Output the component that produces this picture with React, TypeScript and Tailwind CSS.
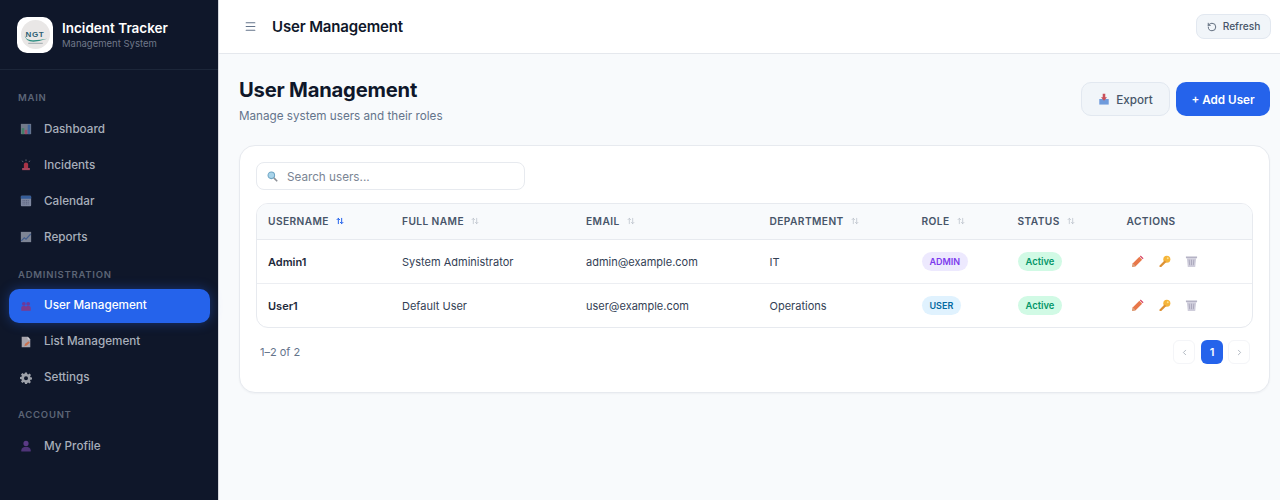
import { Menu, RotateCw, ChevronLeft, ChevronRight, ArrowUpDown } from 'lucide-react'

const FONT = "font-['Inter','Liberation_Sans',sans-serif]"

function DashboardIcon() {
  return (
    <svg viewBox="0 0 14 14" className="w-3 h-3 opacity-80">
      <rect x="1" y="1" width="12" height="12" fill="#8b93a3" />
      <rect x="2" y="6" width="3" height="7" fill="#4f9a78" />
      <rect x="5.5" y="8" width="3" height="5" fill="#c25a7c" />
      <rect x="9" y="2" width="3" height="11" fill="#4a78b8" />
    </svg>
  )
}

function AlarmIcon() {
  return (
    <svg viewBox="0 0 14 14" className="w-3 h-3 opacity-80">
      <path d="M4.5 11V6.5a2.5 2.5 0 0 1 5 0V11z" fill="#d13c4f" />
      <rect x="2.5" y="10.5" width="9" height="2.5" fill="#c9516a" />
      <path d="M7 .5v2M2.5 2l1.2 1.6M11.5 2l-1.2 1.6" stroke="#a3a8b3" strokeWidth="0.8" />
    </svg>
  )
}

function CalendarIcon() {
  return (
    <svg viewBox="0 0 14 14" className="w-3 h-3 opacity-80">
      <rect x="1" y="1" width="12" height="12" rx="1" fill="#9aa3bd" />
      <rect x="1" y="1" width="12" height="3.5" rx="1" fill="#3f6fb5" />
      <path d="M3 6.5h8M3 8.5h8M3 10.5h8" stroke="#6a7391" strokeWidth="1" strokeDasharray="1.2 .8" />
    </svg>
  )
}

function ChartIcon() {
  return (
    <svg viewBox="0 0 14 14" className="w-3 h-3 opacity-80">
      <rect x="1" y="1" width="12" height="12" fill="#9aa1b0" />
      <path d="M1.5 11.5 5 8l2 1.5L12.5 3.5" stroke="#4e6ea6" strokeWidth="1.3" fill="none" />
    </svg>
  )
}

function UsersIcon() {
  return (
    <svg viewBox="0 0 14 14" className="w-3 h-3">
      <circle cx="4.5" cy="4.5" r="2.2" fill="#6a3a9c" />
      <circle cx="9.5" cy="4.5" r="2.2" fill="#6a3a9c" />
      <path d="M1.5 12.5V9a2 2 0 0 1 2-2h2a2 2 0 0 1 1.5.7A2 2 0 0 1 8.5 7h2a2 2 0 0 1 2 2v3.5z" fill="#7c3a8c" />
    </svg>
  )
}

function ListIcon() {
  return (
    <svg viewBox="0 0 14 14" className="w-3 h-3">
      <path d="M2 1h7l3 3v9H2z" fill="#a8a5ad" />
      <path d="M9 1l3 3H9z" fill="#d7d5da" />
      <path d="M5 12l1-3 4-3 1.5 1.5-3.5 3.5z" fill="#c9714f" />
    </svg>
  )
}

function GearIcon() {
  return (
    <svg viewBox="0 0 24 24" className="w-3 h-3" fill="#9da1a9">
      <path fillRule="evenodd" d="M10 1h4l.6 3.2 1.9.8 2.7-1.8 2.8 2.8-1.8 2.7.8 1.9L24 11v4l-3.2.6-.8 1.9 1.8 2.7-2.8 2.8-2.7-1.8-1.7.7L14 24h-4l-.6-3.1-1.9-.8-2.7 1.8L2 19.1l1.8-2.7-.8-1.800L0 14v-4l3-.6.8-1.9L2 4.800 4.800 2l2.700 1.800 1.900-.7zM12 8.500a4 4 0 1 0 0 8 4 4 0 0 0 0-8z" />
    </svg>
  )
}

function ProfileIcon() {
  return (
    <svg viewBox="0 0 14 14" className="w-3 h-3">
      <circle cx="7" cy="4" r="3" fill="#5b3a86" />
      <path d="M1.5 13.5V12c0-2.5 2.5-4 5.5-4s5.5 1.5 5.5 4v1.5z" fill="#4f3478" />
    </svg>
  )
}

function PencilIcon() {
  return (
    <svg viewBox="0 0 14 14" className="w-[13px] h-[13px]">
      <path d="M1 13l1-4 7-7 3 3-7 7z" fill="#e8784a" />
      <path d="M9.5 1.5l1-1 3 3-1 1z" fill="#d9496a" />
      <path d="M1 13l1-4 3 3z" fill="#d9a27e" />
    </svg>
  )
}

function KeyIcon() {
  return (
    <svg viewBox="0 0 14 14" className="w-[13px] h-[13px]">
      <circle cx="9.5" cy="4.5" r="3.8" fill="#f5b53a" />
      <path d="M7 6L1.5 11.5l.3 1.5 1.7-.2L9 7.5z" fill="#dd9134" />
      <circle cx="10.5" cy="3.5" r="1" fill="#fbe08e" />
    </svg>
  )
}

function TrashIcon() {
  return (
    <svg viewBox="0 0 14 14" className="w-[13px] h-[13px]">
      <path d="M1 1.5h12v2H1z" fill="#b5b3c5" />
      <path d="M2 3.5h10L11 13H3z" fill="#cfcddb" />
      <path d="M4.5 5l.5 6M7 5v6M9.5 5L9 11" stroke="#a09eb3" strokeWidth="0.8" />
    </svg>
  )
}

function SearchIcon() {
  return (
    <svg viewBox="0 0 14 14" className="w-[11px] h-[11px]">
      <circle cx="5.5" cy="5.5" r="4.2" fill="#a9d4ea" stroke="#6ea5c4" strokeWidth="1.3" />
      <path d="M8.7 8.7L13 13" stroke="#8b8f96" strokeWidth="2" />
    </svg>
  )
}

function ExportIcon() {
  return (
    <svg viewBox="0 0 14 14" className="w-[12px] h-[12px]">
      <path d="M1.5 7h11v6.5h-11z" fill="#6f9bdc" />
      <path d="M5.5 1h3v4h2L7 9 3.5 5h2z" fill="#c9505a" />
    </svg>
  )
}

function Logo() {
  return (
    <div className="w-9 h-9 rounded-[10px] bg-white flex items-center justify-center">
      <div className="relative w-[29px] h-[29px] rounded-full bg-[#e9e7e6] flex items-center justify-center">
        <span className="text-[8px] leading-none font-bold tracking-[0.08em] text-[#2c5f74] font-['Liberation_Sans',sans-serif]">NGT</span>
        <svg viewBox="0 0 28 28" className="absolute inset-0 w-full h-full">
          <path d="M3 13q1 7 9 6.5 7-.5 13-1.5-7 2.5-13 3-8 0-9-8z" fill="#2f8f83" />
          <path d="M7 22.5h14" stroke="#8a9aa0" strokeWidth="0.8" />
        </svg>
      </div>
    </div>
  )
}

const SECTIONS = [
  {
    title: 'MAIN',
    items: [
      { label: 'Dashboard', icon: <DashboardIcon /> },
      { label: 'Incidents', icon: <AlarmIcon /> },
      { label: 'Calendar', icon: <CalendarIcon /> },
      { label: 'Reports', icon: <ChartIcon /> },
    ],
  },
  {
    title: 'ADMINISTRATION',
    items: [
      { label: 'User Management', icon: <UsersIcon />, active: true },
      { label: 'List Management', icon: <ListIcon /> },
      { label: 'Settings', icon: <GearIcon /> },
    ],
  },
  {
    title: 'ACCOUNT',
    items: [{ label: 'My Profile', icon: <ProfileIcon /> }],
  },
]

const USERS = [
  { username: 'Admin1', name: 'System Administrator', email: 'admin@example.com', dept: 'IT', role: 'ADMIN' },
  { username: 'User1', name: 'Default User', email: 'user@example.com', dept: 'Operations', role: 'USER' },
]

const COLUMNS = [
  { label: 'USERNAME', sorted: true },
  { label: 'FULL NAME' },
  { label: 'EMAIL' },
  { label: 'DEPARTMENT' },
  { label: 'ROLE' },
  { label: 'STATUS' },
]

const ROW = 'grid grid-cols-[134px_184px_183.5px_152px_96px_109px_1fr] items-center pl-[11px]'

function Sidebar() {
  return (
    <aside className="w-[219px] shrink-0 bg-[#0f172a] border-r border-[#d5d8de] flex flex-col">
      <div className="h-[70px] shrink-0 border-b border-[#1c2639] flex items-center gap-[9px] pl-[17px]">
        <Logo />
        <div>
          <div className="text-[13.5px] leading-[17px] font-semibold text-white">Incident Tracker</div>
          <div className="pt-px text-[9.5px] leading-[12px] text-[#6f7889]">Management System</div>
        </div>
      </div>
      <nav className="pl-[9px] pr-[8px] pt-[21px]">
        {SECTIONS.map((s) => (
          <div key={s.title} className="mb-[13.5px]">
            <div className="h-[14px] pl-[9px] mb-[7px] text-[9.5px] leading-[14px] font-semibold tracking-[0.08em] text-[#5c6576]">
              {s.title}
            </div>
            <div className="flex flex-col gap-[2px]">
              {s.items.map((item) => (
                <div
                  key={item.label}
                  className={
                    item.active
                      ? 'h-[34px] flex items-center gap-[12px] pl-[11px] rounded-[10px] bg-[#2563eb] text-white font-medium shadow-[0_0_12px_rgba(37,99,235,0.4)]'
                      : 'h-[34px] flex items-center gap-[12px] pl-[11px] rounded-[10px] text-[#a8afbb] font-medium'
                  }
                >
                  {item.icon}
                  <span className="pt-px text-[11.7px] leading-none">{item.label}</span>
                </div>
              ))}
            </div>
          </div>
        ))}
      </nav>
    </aside>
  )
}

function UsersTable() {
  return (
    <div className="rounded-xl border border-[#e7eaef] overflow-hidden">
      <div className={ROW + ' h-[36px] bg-[#f8fafc] border-b border-[#e7eaef]'}>
        {COLUMNS.map((c) => (
          <div key={c.label} className="flex items-center gap-[7px] text-[10.2px] font-semibold tracking-[0.04em] text-[#475569]">
            {c.label}
            <ArrowUpDown
              strokeWidth={c.sorted ? 3 : 2}
              className={c.sorted ? 'w-2 h-2 text-[#2563eb]' : 'w-2 h-2 text-[#b4bbc6]'}
            />
          </div>
        ))}
        <div className="text-[10.2px] font-semibold tracking-[0.04em] text-[#475569]">ACTIONS</div>
      </div>
      {USERS.map((u, i) => (
        <div key={u.username} className={i === 0 ? ROW + ' h-[44px] border-b border-[#eceef2]' : ROW + ' h-[43px]'}>
          <div className="pt-px text-[11px] font-semibold text-[#1e293b]">{u.username}</div>
          <div className="pt-px text-[11px] text-[#334155]">{u.name}</div>
          <div className="pt-px text-[11px] text-[#334155]">{u.email}</div>
          <div className="pt-px text-[11px] text-[#334155]">{u.dept}</div>
          <div className="flex">
            <span
              className={
                u.role === 'ADMIN'
                  ? 'px-2 py-[3px] rounded-full text-[9px] leading-[13px] font-semibold bg-[#ede9fe] text-[#7c3aed]'
                  : 'px-2 py-[3px] rounded-full text-[9px] leading-[13px] font-semibold bg-[#e0f2fe] text-[#0369a1]'
              }
            >
              {u.role}
            </span>
          </div>
          <div className="flex">
            <span className="px-2 py-[3px] rounded-full text-[9.4px] leading-[13px] font-semibold bg-[#d1fae5] text-[#059669]">
              Active
            </span>
          </div>
          <div className="flex items-center gap-[14px] pl-[4px]">
            <PencilIcon />
            <KeyIcon />
            <TrashIcon />
          </div>
        </div>
      ))}
    </div>
  )
}

export default function App() {
  return (
    <div className={FONT + ' h-[500px] w-[1280px] flex overflow-hidden bg-[#f8fafc]'}>
      <Sidebar />
      <div className="flex-1 min-w-0 flex flex-col">
        <header className="h-[54px] shrink-0 bg-white border-b border-[#e5e8ed] flex items-center justify-between pl-[25px] pr-[9px]">
          <div className="flex items-center gap-[15px]">
            <Menu className="w-[13px] h-[13px] text-[#64748b]" />
            <h2 className="pt-[2px] text-[15px] font-semibold tracking-[-0.01em] text-[#0f172a]">User Management</h2>
          </div>
          <button className="h-[25px] w-[75px] rounded-lg border border-[#e2e8f0] bg-[#f1f5f9] flex items-center justify-center gap-[6px] text-[10.2px] font-medium text-[#475569]">
            <RotateCw className="w-[10px] h-[10px] -scale-x-100" />
            Refresh
          </button>
        </header>
        <main className="pr-[10px] pl-5 pt-[22px]">
          <div className="flex items-start justify-between mb-[20px]">
            <div>
              <h1 className="text-[20.2px] leading-[28px] font-bold tracking-[-0.01em] text-[#0f172a]">User Management</h1>
              <p className="mt-[3px] text-[11.7px] leading-[18px] text-[#64748b]">Manage system users and their roles</p>
            </div>
            <div className="flex gap-[6px] mt-[6px]">
              <button className="h-[34px] w-[89px] rounded-[10px] border border-[#e2e8f0] bg-[#f1f5f9] flex items-center justify-center gap-[6px] text-[11.7px] font-medium text-[#475569]">
                <ExportIcon />
                <span className="pt-[3px]">Export</span>
              </button>
              <button className="h-[34px] w-[94px] pt-[3px] rounded-[10px] bg-[#2563eb] text-white text-[11.7px] font-semibold">
                + Add User
              </button>
            </div>
          </div>
          <section className="bg-white rounded-2xl border border-[#e7eaef] shadow-[0_1px_2px_rgba(15,23,42,0.04)] px-[16px] pt-[16px] pb-[28px]">
            <div className="w-[269px] h-[28px] rounded-lg border border-[#e7eaef] flex items-center gap-[9px] pl-[10px] mb-[13px]">
              <SearchIcon />
              <span className="pt-[3px] text-[11.7px] text-[#7b8594]">Search users...</span>
            </div>
            <UsersTable />
            <div className="flex items-center justify-between mt-[12px] pl-[4px] pr-[3px]">
              <span className="text-[11px] text-[#64748b]">1–2 of 2</span>
              <div className="flex items-center">
                <div className="w-[22px] h-[24px] rounded-md border border-[#f4f5f8] flex items-center justify-center text-[#9aa3af]">
                  <ChevronLeft className="w-[9px] h-[9px]" />
                </div>
                <div className="ml-[6px] w-[22px] h-[24px] rounded-md bg-[#2563eb] flex items-center justify-center text-[11px] font-semibold text-white">
                  1
                </div>
                <div className="ml-[5px] w-[22px] h-[24px] rounded-md border border-[#f4f5f8] flex items-center justify-center text-[#9aa3af]">
                  <ChevronRight className="w-[9px] h-[9px]" />
                </div>
              </div>
            </div>
          </section>
        </main>
      </div>
    </div>
  )
}
